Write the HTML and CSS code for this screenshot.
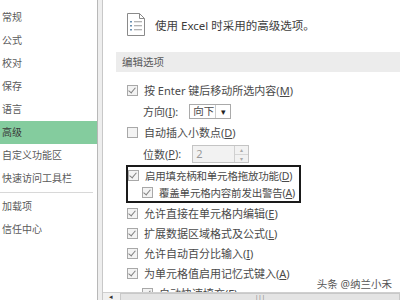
FILE: index.html
```html
<!DOCTYPE html>
<html lang="zh-CN">
<head>
    <meta charset="UTF-8">
    <title>Excel 选项 - 高级</title>
    <link rel="stylesheet" href="styles.css">
</head>
<body>
    <div class="window">
        <!-- 左侧分类 -->
        <ul class="nav">
            <li>常规</li>
            <li>公式</li>
            <li>校对</li>
            <li>保存</li>
            <li>语言</li>
            <li class="active">高级</li>
            <li>自定义功能区</li>
            <li>快速访问工具栏</li>
            <li class="sep"></li>
            <li>加载项</li>
            <li>信任中心</li>
        </ul>

        <div class="gap"></div>

        <div class="panel">
            <div class="scroll">
                <div class="title">
                    <svg class="doc-icon" width="20" height="25" viewBox="0 0 20 25">
                        <path d="M1.5 1.5H13.5L18.5 6.5V23.5H1.5Z" fill="#fff" stroke="#8a8a8a"/>
                        <path d="M13.5 1.5V6.5H18.5" fill="none" stroke="#8a8a8a"/>
                        <rect x="4" y="9" width="2" height="1.5" fill="#6a8fb0"/>
                        <rect x="4" y="13" width="2" height="1.5" fill="#6a8fb0"/>
                        <rect x="4" y="17" width="2" height="1.5" fill="#6a8fb0"/>
                        <path d="M8 9.75H16M8 13.75H16M8 17.75H16" stroke="#9a9a9a"/>
                    </svg>
                    <span>使用 Excel 时采用的高级选项。</span>
                </div>

                <div class="section">编辑选项</div>

                <div class="options">
                    <div class="row"><span class="cb on"></span>按 Enter 键后移动所选内容(<u>M</u>)</div>
                    <div class="row sub tall">方向(<u>I</u>):
                        <span class="combo"><span class="combo-val">向下</span><span class="combo-btn">▾</span></span>
                    </div>
                    <div class="row"><span class="cb"></span>自动插入小数点(<u>D</u>)</div>
                    <div class="row sub taller">位数(<u>P</u>):
                        <span class="spin"><span class="spin-val">2</span><span class="spin-btns"><i>▴</i><i>▾</i></span></span>
                    </div>

                    <div class="focus-box">
                        <div class="row inner"><span class="cb on"></span>启用填充柄和单元格拖放功能(<u>D</u>)</div>
                        <div class="row inner indent"><span class="cb on"></span>覆盖单元格内容前发出警告(<u>A</u>)</div>
                    </div>

                    <div class="row"><span class="cb on"></span>允许直接在单元格内编辑(<u>E</u>)</div>
                    <div class="row"><span class="cb on"></span>扩展数据区域格式及公式(<u>L</u>)</div>
                    <div class="row"><span class="cb on"></span>允许自动百分比输入(<u>I</u>)</div>
                    <div class="row"><span class="cb on"></span>为单元格值启用记忆式键入(<u>A</u>)</div>
                    <div class="row indent"><span class="cb on"></span>自动快速填充(<u>F</u>)</div>
                </div>
            </div>

            <div class="hscroll">
                <span class="hs-btn">◂</span>
                <span class="hs-thumb"><span class="grip">|||</span></span>
            </div>

            <div class="watermark">头条 @纳兰小禾</div>
        </div>
    </div>
</body>
</html>
```

FILE: styles.css
```css
body {
    margin: 0;
    font-family: "Noto Sans", "Noto Sans CJK SC", sans-serif;
    color: #555;
}
.window {
    display: flex;
    width: 400px;
    height: 300px;
    overflow: hidden;
    background: #fff;
}

/* 左侧分类 */
.nav {
    list-style: none;
    margin: 0;
    padding: 6px 0 0 0;
    width: 97px;
    border-right: 1px solid #b8b8b8;
    font-size: 10px;
    color: #5a5a5a;
}
.nav li {
    height: 23px;
    line-height: 23px;
    padding-left: 2px;
}
.nav li.active {
    background-color: #84cc9e;
    color: #3a3a3a;
}
.nav li.sep {
    height: 0;
    border-top: 1px solid #d8d8d8;
    margin: 2px 4px 2px 0;
}
.gap {
    width: 4px;
    background: #eeeeee;
    border-right: 1px solid #c8c8c8;
}

/* 右侧内容 */
.panel {
    flex: 1;
    display: flex;
    flex-direction: column;
    position: relative;
    min-width: 0;
}
.scroll {
    flex: 1;
    overflow: hidden;
}
.title {
    display: flex;
    align-items: center;
    gap: 9px;
    padding: 12px 0 0 23px;
    height: 25px;
    font-size: 11.5px;
    color: #3c3c3c;
}
.doc-icon {
    display: block;
}
.section {
    margin: 15px 0 0 13px;
    height: 20px;
    line-height: 20px;
    padding-left: 6px;
    background: #ececec;
    font-size: 10.5px;
    color: #5a5a5a;
}
.options {
    padding: 8px 0 0 24px;
    font-size: 11px;
    color: #4a4a4a;
}
.row {
    display: flex;
    align-items: center;
    height: 20px;
    white-space: nowrap;
}
.row.sub {
    padding-left: 16px;
}
.row.tall {
    height: 22px;
}
.row.taller {
    height: 23px;
}
.row.indent {
    padding-left: 15px;
}

/* 复选框 */
.cb {
    width: 9px;
    height: 9px;
    border: 1px solid #a8a8a8;
    background: #f3f3f3;
    margin-right: 6px;
    flex: none;
    position: relative;
}
.cb.on::after {
    content: "";
    position: absolute;
    left: 2px;
    top: 0;
    width: 3px;
    height: 6px;
    border-right: 1.5px solid #808080;
    border-bottom: 1.5px solid #808080;
    transform: rotate(40deg);
}

/* 下拉框 */
.combo {
    display: flex;
    margin-left: 11px;
    height: 13px;
    border: 1px solid #aaa;
    background: #fff;
    font-size: 10.5px;
}
.combo-val {
    width: 22px;
    padding-left: 3px;
    line-height: 13px;
    border-right: 1px solid #ccc;
}
.combo-btn {
    width: 14px;
    text-align: center;
    line-height: 13px;
    font-size: 9px;
    color: #222;
}

/* 数值框（禁用） */
.spin {
    display: flex;
    margin-left: 11px;
    height: 16px;
    border: 1px solid #c4c4c4;
    background: #f2f2f2;
    color: #999;
}
.spin-val {
    width: 38px;
    padding-left: 3px;
    line-height: 16px;
    font-size: 11px;
}
.spin-btns {
    display: flex;
    flex-direction: column;
    width: 13px;
    border-left: 1px solid #d0d0d0;
}
.spin-btns i {
    flex: 1;
    font-style: normal;
    font-size: 6px;
    line-height: 8px;
    text-align: center;
    color: #aaa;
}
.spin-btns i + i {
    border-top: 1px solid #d6d6d6;
}

/* 焦点框 */
.focus-box {
    width: 175px;
    box-sizing: border-box;
    margin: 0 0 0 -1px;
    border: 2px solid #1a1a1a;
    font-size: 10.5px;
    letter-spacing: -0.2px;
}
.row.inner {
    height: 17px;
    padding-left: 0;
}
.row.inner.indent {
    padding-left: 14px;
}
.row.inner.indent .cb {
    margin-right: 6px;
}

/* 底部滚动条 */
.hscroll {
    display: flex;
    height: 7px;
    border-top: 1px solid #cfcfcf;
    background: #f0f0f0;
}
.hs-btn {
    width: 16px;
    font-size: 7px;
    line-height: 7px;
    text-align: center;
    color: #333;
}
.hs-thumb {
    flex: 1;
    margin-left: 1px;
    background: #e4e4e4;
    border: 1px solid #c8c8c8;
    border-bottom: none;
    text-align: center;
    font-size: 6px;
    line-height: 6px;
    color: #777;
}
.watermark {
    position: absolute;
    right: 8px;
    bottom: 9px;
    font-size: 10.5px;
    color: #555;
    text-shadow: 0 0 2px #fff;
}
```
